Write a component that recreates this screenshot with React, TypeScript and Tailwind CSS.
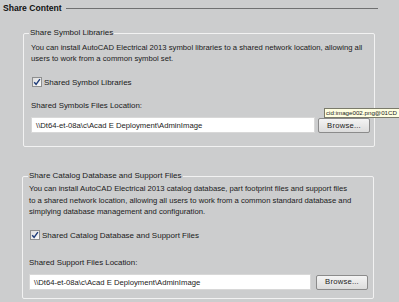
import React from 'react'

function CheckBox() {
  return (
    <span className="inline-flex w-[10px] h-[10px] items-center justify-center border border-[#8e8f8f] bg-gradient-to-br from-[#dcdcdc] to-[#fbfbfb] shrink-0">
      <svg width="8" height="8" viewBox="0 0 8 8">
        <path d="M1.2 4.2 L3.1 6.3 L6.9 1.2" fill="none" stroke="#1d3b78" strokeWidth="1.4" />
      </svg>
    </span>
  )
}

function BrowseButton() {
  return (
    <button className="w-[52px] h-[15px] shrink-0 border border-[#8b8b8b] rounded-[2px] bg-gradient-to-b from-[#f4f4f4] to-[#dcdcdc] text-[7.7px] leading-none text-[#222] tracking-[0.2px]">
      Browse...
    </button>
  )
}

export default function App() {
  return (
    <div className="relative w-[399px] h-[302px] overflow-hidden bg-[#cccdce] text-[#1a1a1a] text-[7.7px] leading-[11px] [font-family:'Liberation_Sans',Arial,sans-serif]">
      {/* header */}
      <div className="flex items-center h-[16px] pl-[3px] pr-[21px]">
        <span className="font-bold text-[8.6px] text-[#111]">Share Content</span>
        <div className="flex-1 ml-[4px] border-t border-[#6f7071]" />
      </div>

      {/* symbol libraries */}
      <fieldset className="ml-[23px] mt-[12px] w-[352px] border border-[#f2f2f2] rounded-[2px] pl-[7px] pr-[3px] pb-[13px]">
        <legend className="ml-[-2px] px-[1px] leading-[10px] text-[8px]">Share Symbol Libraries</legend>
        <p className="pt-[3.5px] whitespace-nowrap">
          You can install AutoCAD Electrical 2013 symbol libraries to a shared network location, allowing all
          <br />
          users to work from a common symbol set.
        </p>
        <label className="mt-[13px] flex items-center gap-[2px] h-[11px] ml-[1px]">
          <CheckBox />
          <span className="text-[8px]">Shared Symbol Libraries</span>
        </label>
        <div className="mt-[12px] text-[7.9px]">Shared Symbols Files Location:</div>
        <div className="mt-[6.5px] flex items-end gap-[3px]">
          <div className="w-[284px] h-[16px] bg-white border border-[#d8d8d8] flex items-center pl-[4px] whitespace-nowrap">
            \\Dt64-et-08a\c\Acad E Deployment\AdminImage
          </div>
          <BrowseButton />
        </div>
      </fieldset>

      {/* catalog database */}
      <fieldset className="ml-[22px] mt-[24px] w-[352px] border border-[#f2f2f2] rounded-[2px] pl-[6px] pr-[3px] pb-[8px]">
        <legend className="ml-[-1px] px-[1px] leading-[10px] text-[8px]">Share Catalog Database and Support Files</legend>
        <p className="pt-[2px] leading-[11.5px] whitespace-nowrap">
          You can install AutoCAD Electrical 2013 catalog database, part footprint files and support files
          <br />
          to a shared network location, allowing all users to work from a common standard database and
          <br />
          simplying database management and configuration.
        </p>
        <label className="mt-[12px] flex items-center gap-[2px] h-[11px] ml-[1px]">
          <CheckBox />
          <span className="text-[8px]">Shared Catalog Database and Support Files</span>
        </label>
        <div className="mt-[16px] text-[7.9px]">Shared Support Files Location:</div>
        <div className="mt-[6.5px] flex items-center gap-[5px]">
          <div className="w-[282px] h-[16px] bg-white border border-[#d8d8d8] flex items-center pl-[4px] whitespace-nowrap">
            \\Dt64-et-08a\c\Acad E Deployment\AdminImage
          </div>
          <BrowseButton />
        </div>
      </fieldset>

      {/* tooltip */}
      <div className="absolute left-[324px] right-0 top-[108px] h-[10px] pl-[1px] bg-[#ffffe1] border border-r-0 border-[#7a7a6a] text-[6.2px] leading-[8px] whitespace-nowrap">
        cid:image002.png@01CD
      </div>
    </div>
  )
}
